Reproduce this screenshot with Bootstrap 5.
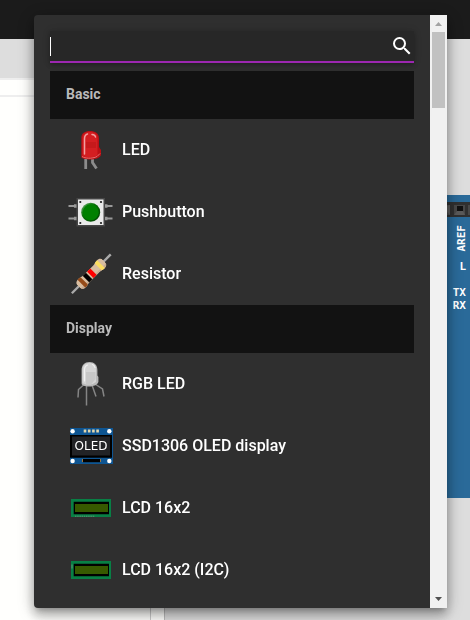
<!DOCTYPE html>
<html lang="en">
<head>
<meta charset="utf-8">
<meta name="viewport" content="width=device-width, initial-scale=1">
<title>Add a part</title>
<link href="https://cdn.jsdelivr.net/npm/bootstrap@5.3.0/dist/css/bootstrap.min.css" rel="stylesheet">
<style>
body { font-family: Roboto, "Liberation Sans", sans-serif; background: #ddd; }
.top-bar { height: 39px; background: #1b1b1b; }
.code-pane { width: 35%; background: #fffffd; border-right: 1px solid #bbb; }
.code-tabs { height: 41px; background: #ddd; border-bottom: 2px solid #eee; }
.code-line { height: 17px; border-bottom: 2px solid #eee; }
.code-text { margin-right: 13px; border-right: 1px solid #ccc; }
.board { width: 48px; height: 303px; margin-top: 156px; padding-top: 7px; background: #2a6a99; color: #fff; font: bold 11px/13px "DejaVu Sans Mono", monospace; text-align: right; }
.board .silk { padding-right: 4px; }
.board .aref { writing-mode: vertical-rl; transform: rotate(180deg); line-height: 9px; }
.board .led-l { margin: 8px 0 13px; }
.pin-strip { height: 15px; }
.part-menu { inset: 15px 23px 12px 34px; background: #2f2f2f; border-radius: 4px; box-shadow: 0 5px 5px -3px rgba(0,0,0,.2), 0 8px 10px 1px rgba(0,0,0,.14), 0 3px 14px 2px rgba(0,0,0,.12), 0 4px 18px rgba(0,0,0,.2); }
.search-box { height: 32px; background: #272727; border-bottom: 2px solid #9c27b0; box-shadow: 0 2px 4px rgba(0,0,0,.25), 0 0 8px rgba(0,0,0,.12); }
.search-box input { outline: 0; color: #fff; caret-color: transparent; min-width: 0; }
.caret { width: 1px; height: 19px; background: #fff; }
.group-title { height: 48px; padding-bottom: 2px; background: #121212; color: #bababa; font-size: 14px; font-weight: 700; line-height: 20px; }
.part { height: 62px; color: #fff; font-size: 16px; font-weight: 500; line-height: 24px; }
.part:hover { background: #3a3a3a; }
.scroll-rail { width: 17px; background: #f1f1f1; }
.scroll-rail button { height: 17px; line-height: 0; }
.scroll-thumb { height: 76px; margin: 0 2px; background: #c1c1c1; }
</style>
<script src="https://cdn.jsdelivr.net/npm/bootstrap@5.3.0/dist/js/bootstrap.bundle.min.js"></script>
</head>
<body>
<div class="d-flex flex-column vh-100 overflow-hidden">
  <header class="top-bar flex-shrink-0"></header>
  <main class="d-flex flex-grow-1 overflow-hidden">
    <section class="code-pane d-flex flex-column flex-shrink-0" aria-label="Code">
      <div class="code-tabs flex-shrink-0"></div>
      <div class="code-line flex-shrink-0"></div>
      <div class="code-text flex-grow-1"></div>
    </section>
    <section class="d-flex flex-grow-1 justify-content-end align-items-start" aria-label="Simulation">
      <div class="board">
        <svg class="pin-strip d-block w-100" viewBox="0 0 48 15" preserveAspectRatio="xMaxYMid slice" aria-hidden="true">
          <path fill="#303030" d="M0 0h48v15H0z"/>
          <g fill="#484848"><path d="M19 3h9v10h-9zM32 3h11v10H32zM46 3h2v10h-2z"/></g>
          <path fill="#111" d="M18 4h6v5h-6zM35 4h6v5h-6z"/>
          <path fill="#5a5a5a" d="M32 13l3-4h6l2 4zM24 4l4-1v10l-4-4z"/>
        </svg>
        <div class="silk d-flex justify-content-end pt-2"><span class="aref">AREF</span></div>
        <div class="silk led-l">L</div>
        <div class="silk">TX</div>
        <div class="silk">RX</div>
      </div>
    </section>
  </main>
</div>

<div class="part-menu position-fixed d-flex overflow-visible">
  <div class="flex-grow-1 p-3 pb-0 overflow-hidden">
    <form class="search-box d-flex align-items-center mb-2" role="search">
      <span class="caret flex-shrink-0"></span>
      <input class="flex-grow-1 bg-transparent border-0 p-0" type="text" aria-label="Search parts">
      <button class="btn p-0 border-0 d-flex" type="submit" aria-label="Search">
        <svg width="24" height="24" viewBox="0 0 24 24" fill="#fff"><path d="M15.5 14h-.79l-.28-.27A6.471 6.471 0 0 0 16 9.5 6.5 6.5 0 1 0 9.5 16c1.61 0 3.09-.59 4.23-1.57l.27.28v.79l5 4.99L20.49 19l-4.99-5zm-6 0C7.01 14 5 11.99 5 9.5S7.01 5 9.5 5 14 7.01 14 9.5 11.99 14 9.5 14z"/></svg>
      </button>
    </form>

    <h2 class="group-title d-flex align-items-center px-3 m-0">Basic</h2>
    <a href="#led" class="part d-flex align-items-center gap-2 px-3 text-decoration-none">
      <svg width="48" height="48" viewBox="0 0 48 48" aria-hidden="true">
        <path fill="none" stroke="#8c8c8c" stroke-width="2.8" d="M19.7 32v11M26.5 32v4.500l4 6"/>
        <path fill="#b90f14" d="M15.300 12C15.300 7 19 5 24 5s9 2.500 9 7v9l2 3v5c-1 3-6 4.500-11 4.500-4 0-8-1-8.700-2z"/>
        <path fill="#d41e21" d="M16.500 12c0-4 3-6 7.500-6s7.500 2 7.500 6v17c-3 3-11 3-15 1z"/>
        <path fill="#bd1518" d="M20 16h10v6H20z" opacity=".6"/>
        <path fill="none" stroke="#f0a0a0" stroke-width="1.500" stroke-linecap="round" d="M18.500 28V13c0-3 1-4.500 3-5M26 8.500c2 .2 3.300 1 3.500 2.500"/>
        <path fill="none" stroke="#e8716f" stroke-width="1" d="M16 30.500c3 2 10 2.500 15 0l3-3"/>
      </svg>LED</a>
    <a href="#pushbutton" class="part d-flex align-items-center gap-2 px-3 text-decoration-none">
      <svg width="48" height="48" viewBox="0 0 48 48" aria-hidden="true">
        <defs><linearGradient id="bevel" x1="0" y1="0" x2="1" y2="1"><stop offset="0" stop-color="#6fb26f"/><stop offset=".4" stop-color="#087008"/><stop offset="1" stop-color="#003c00"/></linearGradient></defs>
        <path fill="none" stroke="#999" stroke-width="1.800" d="M2.500 18h8M39 18h7.500M2.500 30.500h8M39 30.500h7.500"/>
        <path fill="none" stroke="#999" stroke-width="3.600" d="M8 18h3M38.500 18h3M8 30.500h3M38.500 30.500h3"/>
        <path fill="#464646" d="M10.500 10h28.500v28.500H10.500z"/>
        <path fill="#eaeaea" d="M12 11.500h25.500V37H12z"/>
        <g fill="#1b1b1b"><circle cx="14.300" cy="14" r="1.100"/><circle cx="35" cy="14" r="1.100"/><circle cx="14.300" cy="35" r="1.100"/><circle cx="35" cy="35" r="1.100"/></g>
        <circle cx="24.700" cy="24.300" r="9.500" fill="url(#bevel)"/><circle cx="24.700" cy="24.300" r="8" fill="#008000"/>
      </svg>Pushbutton</a>
    <a href="#resistor" class="part d-flex align-items-center gap-2 px-3 text-decoration-none">
      <svg width="48" height="48" viewBox="0 0 48 48" aria-hidden="true">
        <defs><clipPath id="res-body"><path d="M-18-1.500c0-2.600 2-4 5-4 2.500 0 3.500 1 6 1H7c2.500 0 3.500-1 6-1 3 0 5 1.400 5 4v3c0 2.600-2 4-5 4-2.500 0-3.500-1-6-1H-7c-2.500 0-3.500 1-6 1-3 0-5-1.400-5-4z"/></clipPath></defs>
        <g transform="translate(25.300 23.800) rotate(-45)">
          <path stroke="#aaa" stroke-width="2.400" d="M-27.500 0h55"/>
          <g clip-path="url(#res-body)">
            <path fill="#d8bda0" d="M-20-8h40V8h-40z"/><path fill="#c8ac90" d="M-20 3h40v5h-40z"/>
            <path fill="#964b18" d="M-14-8h4V8h-4z"/><path fill="#000" d="M-7.500-8h4.400V8h-4.400z"/><path fill="#f00" d="M-1.400-8h4.400V8h-4.400z"/><path fill="#fbdd61" d="M9.700-8h4V8h-4z"/>
          </g>
        </g>
      </svg>Resistor</a>

    <h2 class="group-title d-flex align-items-center px-3 m-0">Display</h2>
    <a href="#rgb-led" class="part d-flex align-items-center gap-2 px-3 text-decoration-none">
      <svg width="48" height="48" viewBox="0 0 48 48" aria-hidden="true">
        <path fill="none" stroke="#858585" stroke-width="1.500" d="M17.500 25l-5 4.500-.5 8M20.500 26v19.500M26 25l4 11.500M29 24l7.500 5 1.500 7.500"/>
        <path fill="#b9b9b9" d="M15.600 10c0-5 3-8 7.900-8s7.900 3 7.900 8v5.500l1 1.500v5c-1 3-5 4.500-9.500 4.500-4 0-7.300-1-7.300-3z"/>
        <path fill="#d5d5d5" d="M16.500 10c0-4.500 2.500-7 7-7s6.500 2.500 6.500 7v12c-3 3-10 3.500-13.500 1z"/>
        <path fill="#c7c7c7" d="M20 12h9.500v7l-4 5H20z"/>
        <path fill="none" stroke="#f1f1f1" stroke-width="1.200" stroke-linecap="round" d="M18.500 21V9c.3-2.500 1.500-3.500 3-4M26.500 4.500c1.500.5 2 1.500 2.500 3"/>
      </svg>RGB LED</a>
    <a href="#oled" class="part d-flex align-items-center gap-2 px-3 text-decoration-none">
      <svg width="48" height="48" viewBox="0 0 48 48" aria-hidden="true">
        <path fill="#0e5592" d="M4 6h43v36H4z"/>
        <path fill="#000" d="M4 13h42v22.700H4z"/><path fill="#222326" d="M6 14.500h38v19H6z"/>
        <g fill="#fff"><circle cx="6.600" cy="9.200" r="2.200"/><circle cx="43.300" cy="9.200" r="2.200"/><circle cx="6.600" cy="39" r="2.200"/><circle cx="43.300" cy="39" r="2.200"/></g>
        <path stroke="#e1d6ad" stroke-width="3" stroke-dasharray="2.600 1.600" d="M17.700 9h15.400"/>
        <path fill="#a07840" d="M16 37h19v3H16z"/><path fill="#000" d="M17 37h17v3.200H17z"/>
        <text x="25" y="28" text-anchor="middle" fill="#fff" font-family="DejaVu Sans, sans-serif" font-size="12" font-weight="400">OLED</text>
      </svg>SSD1306 OLED display</a>
    <a href="#lcd" class="part d-flex align-items-center gap-2 px-3 text-decoration-none">
      <svg width="48" height="48" viewBox="0 0 48 48" aria-hidden="true">
        <path fill="#087f45" d="M5 15h40v18H5z"/><path fill="#000" d="M7.700 17.700H43v12.600H7.700z"/><path fill="#375900" d="M9 20h33v8H9z"/>
        <path stroke="#5e9875" stroke-dasharray="1.500 .7" d="M9 32.200h20"/>
      </svg>LCD 16x2</a>
    <a href="#lcd-i2c" class="part d-flex align-items-center gap-2 px-3 text-decoration-none">
      <svg width="48" height="48" viewBox="0 0 48 48" aria-hidden="true">
        <path fill="#087f45" d="M5 15h40v18H5z"/><path fill="#000" d="M7.700 17.700H43v12.600H7.700z"/><path fill="#375900" d="M9 20h33v8H9z"/>
        <path stroke="#5e9875" d="M6 18.500v4"/>
      </svg>LCD 16x2 (I2C)</a>
  </div>
  <div class="scroll-rail d-flex flex-column flex-shrink-0">
    <button class="border-0 bg-transparent p-0" type="button" aria-label="Scroll up"><svg width="17" height="17" viewBox="0 0 17 17"><path fill="#a3a3a3" d="M5 11l3.500-4 3.500 4z"/></svg></button>
    <div class="scroll-thumb"></div>
    <button class="border-0 bg-transparent p-0 mt-auto" type="button" aria-label="Scroll down"><svg width="17" height="17" viewBox="0 0 17 17"><path fill="#505050" d="M5 6h7l-3.500 4z"/></svg></button>
  </div>
</div>
</body>
</html>
